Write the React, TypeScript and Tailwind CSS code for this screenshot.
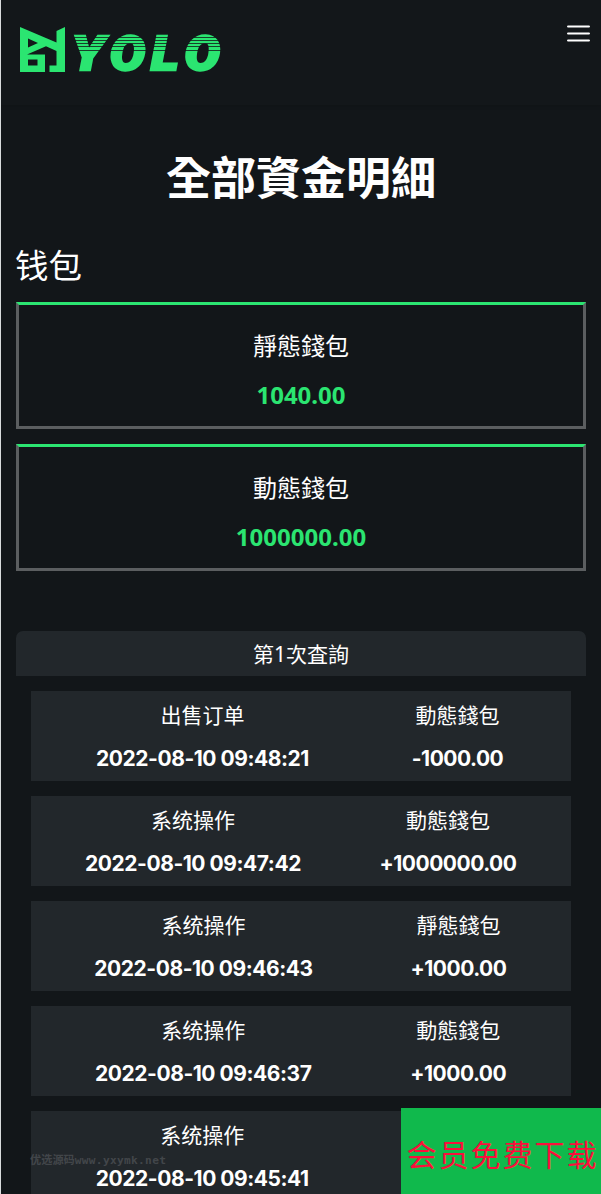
import React from 'react';

interface FundRecord {
  id: number;
  type: string;
  wallet: string;
  time: string;
  amount: string;
  timeClass: string;
  amountClass: string;
}

const wallets = [
  { name: '靜態錢包', balance: '1040.00' },
  { name: '動態錢包', balance: '1000000.00' },
];

const records: FundRecord[] = [
  { id: 1, type: '出售订单', wallet: '動態錢包', time: '2022-08-10 09:48:21', amount: '-1000.00', timeClass: 'w-[213px]', amountClass: 'w-[93px]' },
  { id: 2, type: '系统操作', wallet: '動態錢包', time: '2022-08-10 09:47:42', amount: '+1000000.00', timeClass: 'w-[217px]', amountClass: 'w-[135px]' },
  { id: 3, type: '系统操作', wallet: '靜態錢包', time: '2022-08-10 09:46:43', amount: '+1000.00', timeClass: 'w-[219px]', amountClass: 'w-[95px]' },
  { id: 4, type: '系统操作', wallet: '動態錢包', time: '2022-08-10 09:46:37', amount: '+1000.00', timeClass: 'w-[218px]', amountClass: 'w-[95px]' },
  { id: 5, type: '系统操作', wallet: '動態錢包', time: '2022-08-10 09:45:41', amount: '+1000.00', timeClass: 'w-[214px]', amountClass: 'w-[95px]' },
];

function Logo() {
  return (
    <svg width="210" height="48" viewBox="0 0 210 48" className="block" fill="#2be571">
      <path
        fillRule="evenodd"
        d="M1 1 L37.5 16.5 V5 L46 1 V46 H30.5 V39.5 H37.5 V25 L27 20.2 L8 28.5 H26 V46 H1 Z M9 12.5 V21.5 L19 17 Z M9 33.5 V39.5 H18.5 V33.5 Z"
      />
      <mask id="stripes" maskUnits="userSpaceOnUse" x="50" y="0" width="160" height="48">
        <rect x="50" y="0" width="160" height="48" fill="white" />
        <path d="M50 11.5 h160 M50 14.5 h160 M50 17.5 h160 M50 20.5 h160 M50 24.5 h160" stroke="black" strokeWidth="0.8" />
      </mask>
      <g mask="url(#stripes)">
        <text
          transform="translate(0 44.3) scale(1.1 1)"
          x="48 82.5 120 150.5"
          y="0"
          className="font-['Roboto'] text-[48px] font-black italic"
          stroke="#2be571"
          strokeWidth="2.4"
        >
          YOLO
        </text>
      </g>
    </svg>
  );
}

function MenuIcon() {
  return (
    <svg width="23" height="18" viewBox="0 0 23 18" className="block" stroke="white" strokeWidth="2.2" strokeLinecap="round">
      <path d="M1.1 1.5 H21.9 M1.1 8.5 H21.9 M1.1 15.5 H21.9" />
    </svg>
  );
}

function WalletCard({ name, balance }: { name: string; balance: string }) {
  return (
    <div className="h-[127px] border-[3px] border-[#5b5e60] border-t-[#2be571] text-center">
      <p className="mt-[23px] text-2xl leading-9">{name}</p>
      <p className="mt-[13px] font-['Noto_Sans'] text-2xl leading-9 font-bold text-[#2be571]">{balance}</p>
    </div>
  );
}

function RecordRow({ record }: { record: FundRecord }) {
  return (
    <div className="flex h-[90px] shrink-0 justify-around bg-[#22272b] pt-[8px] pr-[16px] pl-[14px] text-center text-[21px] leading-8 whitespace-nowrap">
      <div className={record.timeClass}>
        <p>{record.type}</p>
        <p className="mt-[12px] flex justify-center font-['Inter'] font-bold tracking-[-0.45px]">{record.time}</p>
      </div>
      <div className={record.amountClass}>
        <p>{record.wallet}</p>
        <p className="mt-[12px] flex justify-center font-['Inter'] font-bold tracking-[-0.5px]">{record.amount}</p>
      </div>
    </div>
  );
}

export default function App() {
  return (
    <div className="relative h-[1194px] w-[601px] overflow-hidden border-l border-[#d9dcdd] bg-[#121619] font-['Noto_Sans','Noto_Sans_CJK_TC',sans-serif] text-white">
      <header className="flex h-[105px] items-start justify-between bg-[#13171a] pt-[25px] pr-[11px] pl-[18px] shadow-[0_1px_4px_rgba(0,0,0,0.15)]">
        <div className="pt-px">
          <Logo />
        </div>
        <button aria-label="menu">
          <MenuIcon />
        </button>
      </header>

      <main className="px-[15px]">
        <h1 className="mt-[40px] text-center text-[45px] leading-[66px] font-bold">全部資金明細</h1>

        <h2 className="mt-[29px] -ml-px font-['Noto_Sans_CJK_SC'] text-[33.5px] leading-[48px]">钱包</h2>
        <div className="mt-[14px] flex flex-col gap-[15px]">
          {wallets.map((item) => (
            <WalletCard key={item.name} name={item.name} balance={item.balance} />
          ))}
        </div>

        <section className="mt-[60px]">
          <div className="h-[45px] rounded-t-[7px] bg-[#22272b] text-center text-[21px] leading-[47px]">第1次査詢</div>
          <div className="mt-[15px] flex flex-col gap-[15px] px-[15px]">
            {records.map((record) => (
              <RecordRow key={record.id} record={record} />
            ))}
          </div>
        </section>
      </main>

      <div className="absolute top-[1151px] left-[29px] font-['Noto_Sans_CJK_SC'] text-[11.2px] leading-4 font-bold whitespace-nowrap text-[#42464a]">
        优选源码<span className="font-['DejaVu_Sans_Mono'] tracking-[0.3px]">www.yxymk.net</span>
      </div>
      <div className="absolute right-0 bottom-0 flex h-[86px] w-[200px] items-center justify-center bg-[#10b94c] pt-[5px] pl-[3px] font-['Noto_Sans_CJK_SC'] text-[30px] tracking-[2px] whitespace-nowrap text-[#fb0f3b]">
        会员免费下载
      </div>
    </div>
  );
}
